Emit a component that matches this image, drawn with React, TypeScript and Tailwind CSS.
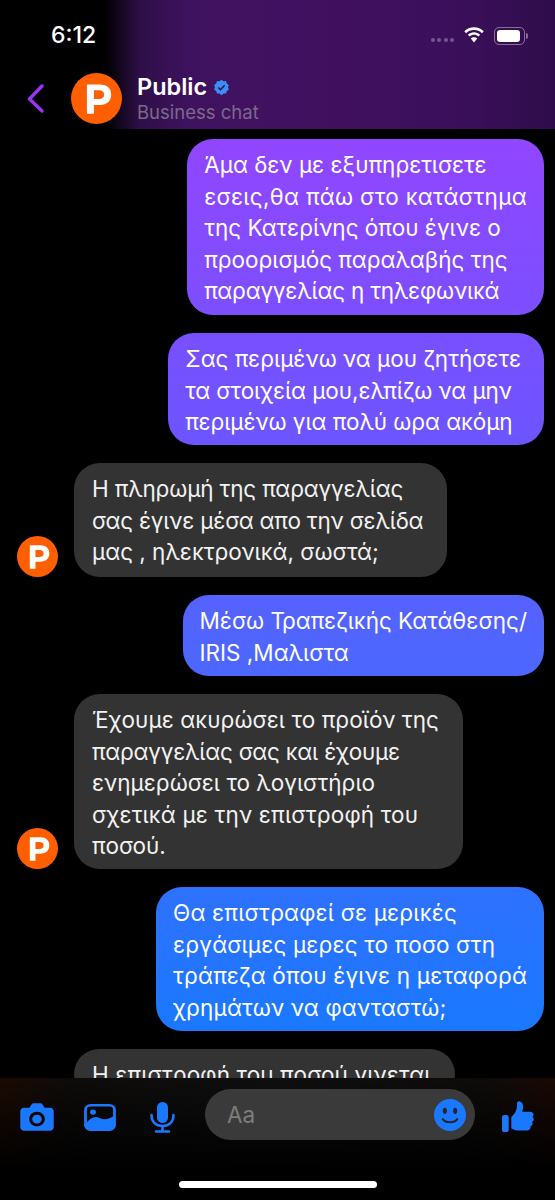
import React from "react";

const font = { fontFamily: "Inter, 'Noto Sans', sans-serif" };

type Line = { t: string; c?: string };

function Logo({ size }: { size: string }) {
  return (
    <div className={`${size} shrink-0 rounded-full bg-[#ff5f00]`}>
      <svg viewBox="0 0 40 40" className="w-full h-full">
        <path fillRule="evenodd" fill="#fff" d="M12.5 9H22.5C28.5 9 31.5 12.2 31.5 17C31.5 21.8 28.2 25 22.5 25H18V32H12.5ZM18 13.6V20.4H22C24.6 20.4 26 19 26 17C26 15 24.6 13.6 22 13.6Z" />
      </svg>
    </div>
  );
}

function Lines({ lines }: { lines: Line[] }) {
  return (
    <>
      {lines.map((l) => (
        <div key={l.t} className={`whitespace-nowrap ${l.c ?? ""}`}>{l.t}</div>
      ))}
    </>
  );
}

function Out({ lines, cls }: { lines: Line[]; cls: string }) {
  return (
    <div className={`self-end w-fit rounded-[26px] pl-[17px] pt-[10px] text-white bg-fixed bg-[linear-gradient(180deg,#a040ff_0px,#9146ff_140px,#6c55ff_440px,#4f66ff_650px,#1a78ff_1030px,#1878ff_1200px)] ${cls}`}>
      <Lines lines={lines} />
    </div>
  );
}

function In({ lines, cls, avatar = true }: { lines: Line[]; cls: string; avatar?: boolean }) {
  return (
    <div className="flex items-end gap-[16px] pl-[17px]">
      {avatar ? <Logo size="w-[41px] h-[41px]" /> : <div className="w-[41px] shrink-0" />}
      <div className={`w-fit rounded-[26px] pl-[18px] pt-[10px] text-[#f2f2f2] bg-[#333333] ${cls}`}>
        <Lines lines={lines} />
      </div>
    </div>
  );
}

export default function App() {
  return (
    <div style={font} className="relative w-[555px] h-[1200px] overflow-hidden bg-black flex flex-col text-white">
      <header className="h-[129px] shrink-0 bg-[linear-gradient(90deg,#000000_0px,#000000_105px,#2e0f47_140px,#3f1260_190px,#40105f_340px,#3a0f5a_470px,#2e0c4a_555px)]">
        <div className="h-[71px] flex items-start justify-between pl-[51px] pr-[27px] pt-[22px]">
          <span className="text-[23px] leading-[26px] font-medium">6:12</span>
          <div className="flex items-start gap-[9px] pt-[5px]">
            <div className="flex gap-[2.500px] pt-[11px]">
              {[0, 1, 2, 3].map((i) => (
                <span key={i} className="w-[4px] h-[4px] rounded-full bg-white/30" />
              ))}
            </div>
            <svg width="22" height="17" viewBox="0 0 22 17" fill="#fff">
              <path d="M11 3C14 3 16.8 4.2 18.9 6.2L20.7 4.3C18.1 1.8 14.7 .3 11 .3C7.3 .3 3.9 1.8 1.3 4.3L3.1 6.2C5.200 4.200 8 3 11 3Z" />
              <path d="M11 7.800C12.700 7.800 14.200 8.400 15.400 9.500L17.200 7.700C15.500 6.100 13.400 5.200 11 5.200C8.600 5.200 6.500 6.100 4.800 7.700L6.600 9.500C7.800 8.400 9.300 7.800 11 7.800Z" />
              <path d="M11 10.300C9.700 10.300 8.600 10.800 7.800 11.600L11 15.500L14.200 11.600C13.400 10.800 12.300 10.300 11 10.300Z" />
            </svg>
            <div className="flex items-center gap-[1px]">
              <div className="w-[31px] h-[18px] rounded-[5px] border border-white/40 p-[2px]">
                <div className="w-[23px] h-full rounded-[3px] bg-white" />
              </div>
              <div className="w-[2px] h-[6px] rounded-r bg-white/40" />
            </div>
          </div>
        </div>
        <div className="h-[58px] flex items-start">
          <svg className="ml-[27px] mt-[13px]" width="18" height="30" viewBox="0 0 18 30" fill="none" stroke="#9a34f5" strokeWidth="3.4" strokeLinecap="round" strokeLinejoin="round">
            <path d="M15 2L2.500 15L15 27" />
          </svg>
          <div className="ml-[26px] mt-[2px]"><Logo size="w-[51px] h-[51px]" /></div>
          <div className="ml-[15px] flex flex-col pt-[3px]">
            <div className="flex items-center gap-[6px]">
              <span className="text-[23.500px] leading-[26px] font-semibold">Public</span>
              <svg width="17" height="17" viewBox="0 0 24 24">
                <path fill="#3d8ef5" d="M12 1l2.900 2.100 3.500-.2 1.100 3.400 2.900 2-1.200 3.400 1.200 3.400-2.900 2-1.100 3.400-3.500-.2L12 23l-2.900-2.700-3.500.2-1.100-3.400-2.900-2 1.200-3.400L1.600 8.300l2.900-2 1.100-3.400 3.500.2z" />
                <path fill="none" stroke="#2d0a50" strokeWidth="2" d="M7.500 12l3 3.200 6-6.500" />
              </svg>
            </div>
            <span className="text-[18.500px] leading-[24px] text-[#7c6a8a]">Business chat</span>
          </div>
        </div>
      </header>

      <main className="flex-1 min-h-0 overflow-hidden pt-[10px] pr-[11px] flex flex-col gap-[18px] text-[22.500px] leading-[31.5px]">
        <Out cls="pb-[8.500px] pr-[17px]" lines={[
          { t: "Άμα δεν με εξυπηρετισετε" },
          { t: "εσεις,θα πάω στο κατάστημα", c: "tracking-[0.32px]" },
          { t: "της Κατερίνης όπου έγινε ο" },
          { t: "προορισμός παραλαβής της" },
          { t: "παραγγελίας η τηλεφωνικά", c: "tracking-[-0.2px]" },
        ]} />
        <Out cls="pb-[7.500px] pr-[23px]" lines={[
          { t: "Σας περιμένω να μου ζητήσετε" },
          { t: "τα στοιχεία μου,ελπίζω να μην", c: "tracking-[-0.07px]" },
          { t: "περιμένω για πολύ ωρα ακόμη", c: "tracking-[-0.07px]" },
        ]} />
        <In cls="pb-[9.500px] pr-[24px]" lines={[
          { t: "Η πληρωμή της παραγγελίας", c: "tracking-[-0.16px]" },
          { t: "σας έγινε μέσα απο την σελίδα", c: "tracking-[-0.2px]" },
          { t: "μας , ηλεκτρονικά, σωστά;" },
        ]} />
        <Out cls="pb-[8px] pr-[17px]" lines={[{ t: "Μέσω Τραπεζικής Κατάθεσης/" }, { t: "IRIS ,Μαλιστα" }]} />
        <In cls="pb-[7.500px] pr-[24px]" lines={[
          { t: "Έχουμε ακυρώσει το προϊόν της", c: "tracking-[0.07px]" },
          { t: "παραγγελίας σας και έχουμε", c: "tracking-[-0.2px]" },
          { t: "ενημερώσει το λογιστήριο" },
          { t: "σχετικά με την επιστροφή του", c: "tracking-[0.17px]" },
          { t: "ποσού." },
        ]} />
        <Out cls="pb-[8px] pr-[17px] tracking-[0.18px]" lines={[
          { t: "Θα επιστραφεί σε μερικές" },
          { t: "εργάσιμες μερες το ποσο στη" },
          { t: "τράπεζα όπου έγινε η μεταφορά" },
          { t: "χρημάτων να φανταστώ;" },
        ]} />
        <In avatar={false} cls="pb-[8px] pr-[25px] tracking-[0.1px]" lines={[{ t: "Η επιστροφή του ποσού γινεται" }]} />
      </main>

      <footer className="absolute left-0 right-0 bottom-0 h-[122px] bg-[linear-gradient(90deg,#1c0a02_0%,#0d0b0a_12%,#0f0f0f_50%,#0d0b0a_88%,#1a0803_100%)]">
        <div className="absolute inset-0 bg-[linear-gradient(180deg,rgba(0,0,0,0)_0%,#000_75%)]" />
        <div className="relative h-[76px] pt-[11px] flex items-start">
          <svg className="ml-[20px] mt-[14px]" width="34" height="28" viewBox="0 0 34 30" preserveAspectRatio="none">
            <path fill="#1a78ff" fillRule="evenodd" d="M4 5H9.500L11.500 1.500C12 .7 12.800 .3 13.700 .3H20.300C21.200 .3 22 .7 22.500 1.500L24.500 5H30C32 5 33.700 6.700 33.700 8.700V26C33.700 28 32 29.700 30 29.700H4C2 29.700 .3 28 .3 26V8.700C.3 6.700 2 5 4 5ZM17 9.500C12.600 9.500 9.200 13 9.200 17.200C9.200 21.500 12.600 25 17 25C21.400 25 24.800 21.500 24.800 17.200C24.800 13 21.400 9.500 17 9.500ZM17 12.500C19.700 12.500 21.800 14.600 21.800 17.200C21.800 19.900 19.700 22 17 22C14.300 22 12.200 19.900 12.200 17.200C12.200 14.600 14.300 12.500 17 12.500Z" />
          </svg>
          <svg className="ml-[30px] mt-[15px]" width="32" height="27" viewBox="0 0 32 30" preserveAspectRatio="none">
            <rect x="1.500" y="1.500" width="29" height="27" rx="5" fill="none" stroke="#1a78ff" strokeWidth="2.800" />
            <circle cx="9" cy="9" r="3" fill="#1a78ff" />
            <path fill="#1a78ff" d="M2 22C6 15 11 13 15.500 15.500C20 18 25 17 30 13V25C30 27.500 28.500 29 26 29H6C3.500 29 2 27.500 2 25Z" />
          </svg>
          <svg className="ml-[34px] mt-[13px]" width="25" height="31" viewBox="0 0 25 31" fill="none">
            <rect x="7" y="0" width="11" height="21" rx="5.500" fill="#1a78ff" />
            <path d="M1.500 13C1.500 20 6 24 12.500 24C19 24 23.500 20 23.500 13" stroke="#1a78ff" strokeWidth="2.600" strokeLinecap="round" />
            <path d="M12.500 24V29M6 29.500H19" stroke="#1a78ff" strokeWidth="2.600" strokeLinecap="round" />
          </svg>
          <div className="ml-[30px] w-[270px] h-[51px] rounded-full bg-[#3a3a3a] flex items-center justify-between pl-[22px] pr-[9px]">
            <span className="text-[22.500px] text-[#7d7d7d]">Aa</span>
            <svg width="32" height="32" viewBox="0 0 31 31">
              <circle cx="15.500" cy="15.500" r="15.500" fill="#1a78ff" />
              <ellipse cx="10.500" cy="11.500" rx="2" ry="3" fill="#262626" />
              <ellipse cx="20.500" cy="11.500" rx="2" ry="3" fill="#262626" />
              <path d="M8.500 19.500C11 23.500 20 23.500 22.500 19.500" fill="none" stroke="#262626" strokeWidth="2" strokeLinecap="round" />
            </svg>
          </div>
          <svg className="ml-[27px] mt-[12px]" width="32" height="31" viewBox="0 0 31 33" preserveAspectRatio="none">
            <rect x="0" y="15" width="6.500" height="18" rx="2.500" fill="#1a78ff" />
            <path fill="#1a78ff" d="M9 17C12 14 14.500 10.500 14.500 5V2.500C14.500 .8 16 0 17.500 .5C19.500 1.200 20.500 3.500 20.500 6.500C20.500 8.500 20 10.200 19.500 11.500H27C29.500 11.500 30.500 13 30.500 14.500C30.500 15.700 30 16.500 29.500 17C30.500 17.700 31 18.700 30.700 20C30.500 21 30 21.700 29 22.300C29.700 23.200 29.800 24.300 29.300 25.300C29 26 28.300 26.600 27.500 27C27.800 28 27.700 29 27 30C26.300 31 25 31.500 23.500 31.500H17C13.500 31.500 11 30.500 9 29Z" />
          </svg>
        </div>
        <div className="relative mt-[27px] mx-auto w-[198px] h-[7px] rounded-full bg-white" />
      </footer>
    </div>
  );
}
